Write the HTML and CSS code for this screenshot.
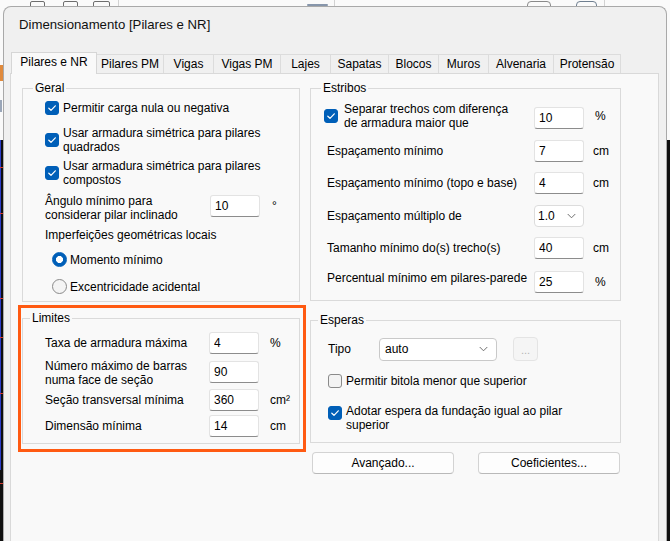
FILE: index.html
```html
<!DOCTYPE html>
<html lang="pt-BR">
<head>
<meta charset="utf-8">
<title>Dimensionamento [Pilares e NR]</title>
<link rel="stylesheet" href="styles.css">
</head>
<body>
<div class="desk">
  <div class="desk-bar">
    <span class="bar-icon ic-a"></span>
    <span class="bar-icon ic-b"></span>
    <span class="bar-icon ic-c"></span>
    <span class="bar-sep sep-a"></span>
    <span class="bar-tab"></span>
    <span class="bar-sep sep-b"></span>
    <span class="bar-icon ic-d"></span>
    <span class="bar-icon ic-e"></span>
    <span class="bar-sep sep-c"></span>
  </div>

  <section class="window">
    <header class="titlebar">Dimensionamento [Pilares e NR]</header>

    <nav class="tabs">
      <span class="tab is-active">Pilares e NR</span>
      <span class="tab tw-68">Pilares PM</span>
      <span class="tab tw-51">Vigas</span>
      <span class="tab tw-68">Vigas PM</span>
      <span class="tab tw-51">Lajes</span>
      <span class="tab tw-59">Sapatas</span>
      <span class="tab tw-51">Blocos</span>
      <span class="tab tw-51">Muros</span>
      <span class="tab tw-66">Alvenaria</span>
      <span class="tab tw-68">Protensão</span>
    </nav>

    <div class="page">
      <!-- left column: Geral + Limites -->
      <div class="col col-left">
        <fieldset class="group group-geral">
          <legend class="legend">Geral</legend>
          <div class="group-body pad-22">
            <label class="check mt-6">
              <span class="box on"><svg viewBox="0 0 10 10"><path d="M1.8 5.2 L4 7.3 L8.3 2.8"/></svg></span>
              <span class="ctext">Permitir carga nula ou negativa</span>
            </label>
            <label class="check mt-11">
              <span class="box on"><svg viewBox="0 0 10 10"><path d="M1.8 5.2 L4 7.3 L8.3 2.8"/></svg></span>
              <span class="ctext">Usar armadura simétrica para pilares<br>quadrados</span>
            </label>
            <label class="check mt-5">
              <span class="box on"><svg viewBox="0 0 10 10"><path d="M1.8 5.2 L4 7.3 L8.3 2.8"/></svg></span>
              <span class="ctext">Usar armadura simétrica para pilares<br>compostos</span>
            </label>
            <div class="field-row top mt-7">
              <span class="lbl w-165">Ângulo mínimo para<br>considerar pilar inclinado</span>
              <input class="field mt-1" type="text" value="10" readonly>
              <span class="unit unit-deg">°</span>
            </div>
            <div class="caption mt-6">Imperfeições geométricas locais</div>
            <label class="radio mt-10">
              <span class="dot on"></span>Momento mínimo
            </label>
            <label class="radio mt-12">
              <span class="dot"></span>Excentricidade acidental
            </label>
          </div>
        </fieldset>

        <div class="highlight">
          <fieldset class="group group-limites">
            <legend class="legend near">Limites</legend>
            <div class="group-body pad-22">
              <div class="field-row mt-7">
                <span class="lbl w-164">Taxa de armadura máxima</span>
                <input class="field" type="text" value="4" readonly>
                <span class="unit">%</span>
              </div>
              <div class="field-row top mt-5">
                <span class="lbl w-164">Número máximo de barras<br>numa face de seção</span>
                <input class="field mt-2" type="text" value="90" readonly>
              </div>
              <div class="field-row mt-2">
                <span class="lbl w-164">Seção transversal mínima</span>
                <input class="field" type="text" value="360" readonly>
                <span class="unit">cm²</span>
              </div>
              <div class="field-row mt-4">
                <span class="lbl w-164">Dimensão mínima</span>
                <input class="field" type="text" value="14" readonly>
                <span class="unit">cm</span>
              </div>
            </div>
          </fieldset>
        </div>
      </div>

      <!-- right column: Estribos + Esperas + buttons -->
      <div class="col col-right">
        <fieldset class="group group-estribos">
          <legend class="legend">Estribos</legend>
          <div class="group-body pad-13">
            <div class="field-row mt-7">
              <span class="box on"><svg viewBox="0 0 10 10"><path d="M1.8 5.2 L4 7.3 L8.3 2.8"/></svg></span>
              <span class="lbl w-190 ml-6">Separar trechos com diferença<br>de armadura maior que</span>
              <input class="field mt-4" type="text" value="10" readonly>
              <span class="unit">%</span>
            </div>
            <div class="field-row mt-10">
              <span class="lbl w-207 ml-3">Espaçamento mínimo</span>
              <input class="field" type="text" value="7" readonly>
              <span class="unit u-9">cm</span>
            </div>
            <div class="field-row mt-10">
              <span class="lbl w-207 ml-3">Espaçamento mínimo (topo e base)</span>
              <input class="field" type="text" value="4" readonly>
              <span class="unit u-9">cm</span>
            </div>
            <div class="field-row mt-11">
              <span class="lbl w-207 ml-3">Espaçamento múltiplo de</span>
              <div class="select small">
                <span>1.0</span>
                <svg class="chev" viewBox="0 0 10 6"><path d="M0.8 0.8 L5 5 L9.2 0.8"/></svg>
              </div>
            </div>
            <div class="field-row mt-10">
              <span class="lbl w-207 ml-3">Tamanho mínimo do(s) trecho(s)</span>
              <input class="field" type="text" value="40" readonly>
              <span class="unit u-9">cm</span>
            </div>
            <div class="field-row mt-12">
              <span class="lbl w-207 ml-3 lift">Percentual mínimo em pilares-parede</span>
              <input class="field" type="text" value="25" readonly>
              <span class="unit">%</span>
            </div>
          </div>
        </fieldset>

        <fieldset class="group group-esperas">
          <legend class="legend near">Esperas</legend>
          <div class="group-body pad-17">
            <div class="field-row mt-10">
              <span class="lbl w-51">Tipo</span>
              <div class="select wide">
                <span>auto</span>
                <svg class="chev" viewBox="0 0 10 6"><path d="M0.8 0.8 L5 5 L9.2 0.8"/></svg>
              </div>
              <span class="more">...</span>
            </div>
            <label class="check mt-13">
              <span class="box"></span>
              <span class="ctext">Permitir bitola menor que superior</span>
            </label>
            <label class="check top mt-16">
              <span class="box on mt-2"><svg viewBox="0 0 10 10"><path d="M1.8 5.2 L4 7.3 L8.3 2.8"/></svg></span>
              <span class="ctext">Adotar espera da fundação igual ao pilar<br>superior</span>
            </label>
          </div>
        </fieldset>

        <div class="actions">
          <button class="btn" type="button">Avançado...</button>
          <button class="btn" type="button">Coeficientes...</button>
        </div>
      </div>
    </div>
  </section>
</div>
</body>
</html>
```

FILE: styles.css
```css
* {
  box-sizing: border-box;
}

html,
body {
  margin: 0;
  height: 541px;
  overflow: hidden;
}

body {
  font-family: "Liberation Sans", Arial, sans-serif;
  font-size: 12px;
  line-height: 14px;
  color: #000;
  background: #0e0e0e;
}

/* desktop behind the dialog */
.desk {
  height: 541px;
  padding: 0 3px;
  background:
    linear-gradient(#e08a3c, #e08a3c) 0 65px / 3px 16px no-repeat,
    linear-gradient(#9aa6b8, #9aa6b8) 0 100px / 2px 12px no-repeat,
    linear-gradient(#d23a30, #d23a30) 0 167px / 3px 1px no-repeat,
    linear-gradient(#d23a30, #d23a30) 0 213px / 3px 1px no-repeat,
    linear-gradient(#d23a30, #d23a30) 0 298px / 3px 1px no-repeat,
    linear-gradient(#d23a30, #d23a30) 0 337px / 3px 1px no-repeat,
    linear-gradient(#d23a30, #d23a30) 0 393px / 3px 1px no-repeat,
    linear-gradient(#d23a30, #d23a30) 0 483px / 3px 1px no-repeat,
    linear-gradient(#2c3cc8, #2c3cc8) 0 140px / 1px 330px no-repeat,
    linear-gradient(#fafafa 0, #fafafa 140px, #0e0e0e 140px);
}

.desk-bar {
  display: flex;
  height: 6px;
  margin: 0 -3px;
  overflow: hidden;
  background: #fafafa;
}

.bar-icon {
  flex: none;
  height: 12px;
  margin-top: 1px;
  border: 1.5px solid #6e6e6e;
  border-radius: 2px;
}

.ic-a { width: 15px; margin-left: 30px; }
.ic-b { width: 15px; margin-left: 18px; }
.ic-c { width: 17px; margin-left: 15px; }
.ic-d { width: 24px; margin-left: 192px; border-color: #8a8a8a; border-radius: 4px; }
.ic-e { width: 21px; margin-left: 25px; border-color: #6f7f90; border-radius: 4px; }

.bar-sep {
  flex: none;
  width: 1px;
  background: #d2d2d2;
}

.sep-a { margin-left: 8px; }
.sep-b { margin-left: 6px; }
.sep-c { margin-left: 7px; }

.bar-tab {
  flex: none;
  align-self: flex-end;
  width: 21px;
  height: 2px;
  margin-left: 188px;
  background: #8796ab;
  border-radius: 1px;
}

/* dialog window */
.window {
  height: 535px;
  display: flex;
  flex-direction: column;
  padding: 0 7px 0 6px;
  background: #f0f0f0;
  border: 1px solid #a9a9a9;
  border-bottom: 0;
  border-radius: 8px 8px 0 0;
}

.titlebar {
  flex: none;
  height: 45px;
  padding: 9px 0 0 9px;
  font-size: 13.2px;
  line-height: 18px;
  color: #111;
}

/* tab strip */
.tabs {
  flex: none;
  display: flex;
  align-items: flex-end;
  height: 22px;
  margin-bottom: -1px;
  padding-left: 3px;
  position: relative;
  z-index: 1;
}

.tab {
  flex: none;
  height: 19px;
  margin: 0 0 1px -1px;
  padding: 0;
  border: 1px solid #dcdcdc;
  border-bottom: 0;
  background: #f0f0f0;
  line-height: 18px;
  text-align: center;
  white-space: nowrap;
}

.tw-51 { width: 51px; }
.tw-59 { width: 59px; }
.tw-66 { width: 66px; }
.tw-68 { width: 68px; }

.tab.is-active {
  width: 86px;
  height: 22px;
  margin: 0 0 0 -2px;
  padding-bottom: 2px;
  background: #f9f9f9;
  border-color: #d6d6d6;
  line-height: 19px;
  position: relative;
  z-index: 1;
}

/* tab page */
.page {
  flex: 1;
  display: flex;
  align-items: flex-start;
  gap: 4px;
  padding: 7px 0 0 7px;
  background: #f9f9f9;
  border: 1px solid #d9d9d9;
  border-bottom: 0;
}

.col {
  flex: none;
  display: flex;
  flex-direction: column;
}

.col-left { width: 288px; }
.col-right { width: 311px; }

/* group boxes */
.group {
  margin: 0;
  padding: 0;
  min-width: 0;
  border: 1px solid #dadada;
}

.legend {
  margin-left: 10px;
  padding: 0 2px;
  line-height: 14px;
}

.legend.near { margin-left: 7px; }

.group-geral {
  height: 221px;
  margin: 0 6px 0 4px;
}

.highlight {
  height: 147px;
  margin-top: 3px;
  border: 3px solid #ff5a12;
}

.group-limites {
  height: 133px;
  margin: 3px 3px 5px 1px;
}

.group-estribos { height: 220px; }

.group-esperas {
  height: 130px;
  margin-top: 12px;
}

.group-body {
  display: flex;
  flex-direction: column;
  align-items: flex-start;
}

.pad-22 { padding-left: 22px; }
.pad-17 { padding-left: 17px; }
.pad-13 { padding-left: 13px; }

/* check boxes */
.check {
  display: flex;
  align-items: center;
  gap: 4px;
}

.check.top { align-items: flex-start; }

.box {
  flex: none;
  display: flex;
  align-items: center;
  justify-content: center;
  width: 14px;
  height: 14px;
  border: 1px solid #8a8a8a;
  border-radius: 3px;
  background: #f3f3f3;
}

.box.on {
  background: #005fb8;
  border-color: #005fb8;
}

.box svg {
  width: 10px;
  height: 10px;
  fill: none;
  stroke: #fff;
  stroke-width: 1.2;
  stroke-linecap: round;
  stroke-linejoin: round;
}

/* radio buttons */
.radio {
  display: flex;
  align-items: center;
  gap: 3px;
  margin-left: 7px;
}

.dot {
  flex: none;
  width: 15px;
  height: 15px;
  border: 1px solid #8a8a8a;
  border-radius: 50%;
  background: #f4f4f4;
}

.dot.on {
  border-color: #005fb8;
  background: radial-gradient(circle, #fff 0, #fff 3.2px, #005fb8 3.8px);
}

/* label + edit rows */
.field-row {
  display: flex;
  align-items: center;
}

.field-row.top { align-items: flex-start; }

.lbl { flex: none; }
.lift { margin-bottom: 8px; }

.w-51 { width: 51px; }
.w-164 { width: 164px; }
.w-165 { width: 165px; }
.w-190 { width: 190px; }
.w-207 { width: 207px; }

.field {
  flex: none;
  width: 50px;
  height: 22px;
  margin: 0;
  padding: 0 4px;
  border: 1px solid #e3e3e3;
  border-bottom-color: #8c8c8c;
  border-radius: 3px;
  background: #fff;
  font: inherit;
  color: #000;
  outline: none;
}

.unit { margin-left: 11px; }
.u-9 { margin-left: 9px; }
.unit-deg { line-height: 22px; margin-top: 1px; margin-left: 12px; }

.caption { white-space: nowrap; }

/* drop-downs */
.select {
  flex: none;
  display: flex;
  align-items: center;
  justify-content: space-between;
  background: #fff;
  border: 1px solid #dcdcdc;
  border-radius: 4px;
}

.select.small {
  width: 50px;
  height: 22px;
  padding: 0 7px 0 3px;
}

.select.wide {
  width: 118px;
  height: 23px;
  padding: 0 8px 0 5px;
  border-color: #c9c9c9;
}

.chev {
  width: 9px;
  height: 6px;
  fill: none;
  stroke: #606060;
  stroke-width: 1;
}

.more {
  flex: none;
  width: 25px;
  height: 24px;
  margin-left: 16px;
  border: 1px solid #e4e4e4;
  border-radius: 4px;
  background: #f5f5f5;
  color: #b4b4b4;
  font-size: 11px;
  line-height: 24px;
  text-align: center;
}

/* bottom buttons */
.actions {
  display: flex;
  gap: 24px;
  margin-top: 9px;
  padding-left: 2px;
}

.btn {
  width: 142px;
  height: 22px;
  padding: 0;
  border: 1px solid #d3d3d3;
  border-bottom-color: #b9b9b9;
  border-radius: 4px;
  background: #fdfdfd;
  font: inherit;
  color: #000;
}

/* spacing helpers */
.mt-1 { margin-top: 1px; }
.mt-2 { margin-top: 2px; }
.mt-4 { margin-top: 4px; }
.mt-5 { margin-top: 5px; }
.mt-6 { margin-top: 6px; }
.mt-7 { margin-top: 7px; }
.mt-10 { margin-top: 10px; }
.mt-11 { margin-top: 11px; }
.mt-12 { margin-top: 12px; }
.mt-13 { margin-top: 13px; }
.mt-16 { margin-top: 16px; }
.ml-3 { margin-left: 3px; }
.ml-6 { margin-left: 6px; }
```
